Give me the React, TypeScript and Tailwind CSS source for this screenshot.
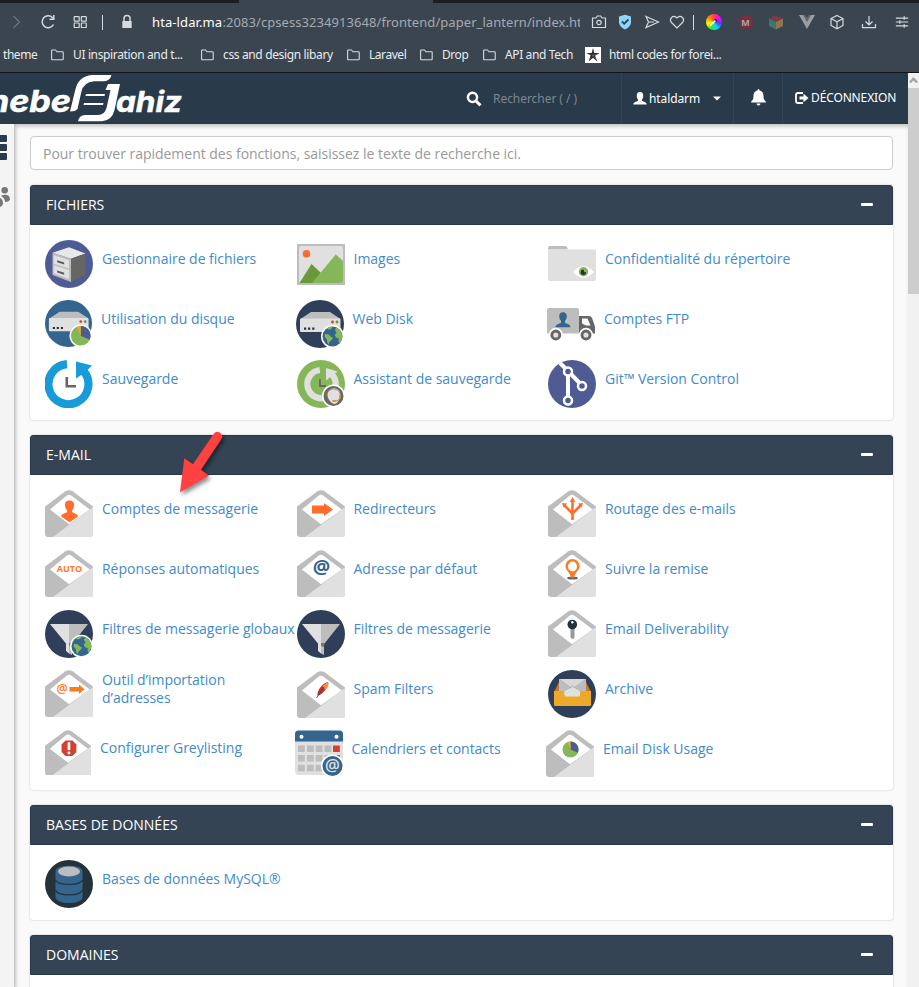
import React from 'react';

type IconProps = { size?: number };

const BLUE = '#33658f';
const NAVY = '#2f3f5a';
const PURPLE = '#4f5b93';
const GREEN = '#85b759';
const ORANGE = '#ff6c2c';

function Svg({ size = 48, children }: { size?: number; children: React.ReactNode }) {
  return (
    <svg width={size} height={size} viewBox="0 0 48 48" className="block">
      {children}
    </svg>
  );
}

function Globe({ x, y }: { x: number; y: number }) {
  return (
    <g transform={`translate(${x} ${y})`}>
      <circle r="11.5" fill="#fff" />
      <circle r="10" fill={BLUE} />
      <path d="M-5.500-8.300C-3.500-9.600-1-10 .5-9.900L-.5-8.200-2-7.300-4.500-6.800ZM-7.500-2.500-4-2-1.500 .2.5 1.200-.8 3.500-3 5.200-3.800 8-5.200 6-5.500 3-7.800.5Z" fill={GREEN} />
      <path d="M3.500-9.200 6-7.800 8.300-5.400 9.700-1.500 9.600 2 8.300 5 7 6.800 6 4.500 6.200 1.800 3.500 1 2.200-1.500 4-4 2.500-6Z" fill={GREEN} />
    </g>
  );
}

function Pie({ x, y, r }: { x: number; y: number; r: number }) {
  return (
    <g transform={`translate(${x} ${y}) scale(${r})`}>
      <circle r="1" fill={GREEN} />
      <path d="M0 0V-1A1 1 0 0 1 .92.4Z" fill={PURPLE} />
      <path d="M0 0V-1A1 1 0 0 0-.42-.9Z" fill="#eca72c" />
    </g>
  );
}

function Person({ x, y, fill, scale = 1 }: { x: number; y: number; fill: string; scale?: number }) {
  return (
    <path
      transform={`translate(${x} ${y}) scale(${scale})`}
      fill={fill}
      d="M0-10C3-10 4.500-8 4.300-5.500 4.200-3 3.500-1.500 2.300-.3V2C4 3.500 8.300 3.500 8.500 7H-8.500C-8.300 3.500-4 3.500-2.300 2V-.3C-3.500-1.500-4.200-3-4.300-5.500-4.500-8-3-10 0-10Z"
    />
  );
}

function Envelope({ size, children }: { size?: number; children?: React.ReactNode }) {
  return (
    <Svg size={size}>
      <path d="M0 16.500 20.500 1.200Q24-.8 27.500 1.200L48 16.500V44Q48 47 45 47H3Q0 47 0 44Z" fill="#bdbdbd" />
      <path d="M5 19.500 21.500 5.800Q24 3.600 26.500 5.800L44.800 19.500 24 34.300Z" fill="#fff" />
      <path d="M45 19.300 48 17.200V44.500Q48 47 45.500 47H8Z" fill="#e0e0e0" />
      {children}
    </Svg>
  );
}

function Server() {
  return (
    <>
      <path d="M15 12H34L44.500 19H4.500Z" fill="#bdbdbd" />
      <rect x="4" y="18.500" width="40.500" height="13.500" rx="1" fill="#e0e0e0" />
      <path d="M8 27.500h2.200v2.200H8ZM12 27.500h2.200v2.200H12ZM16.200 27.500h2.200v2.200h-2.200Z" fill="#26323a" />
      <circle cx="36.500" cy="22" r="1.400" fill="#d43f2f" />
      <circle cx="41" cy="22" r="1.400" fill="#6a9a38" />
    </>
  );
}

function Funnel() {
  return (
    <>
      <circle cx="24" cy="24" r="24" fill={NAVY} />
      <path d="M5 14H24V33L21 33.500Z" fill="#e0e0e0" />
      <path d="M24 14H43L27.500 33.500H24Z" fill="#bdbdbd" />
      <path d="M21 33H24V43.500L21 41Z" fill="#e0e0e0" />
      <path d="M24 33h3V45l-3-1.500Z" fill="#bdbdbd" />
      <path d="M24 33h4l-1.500 4-2.500-1Z" fill="#777" />
    </>
  );
}

const FileManager = () => (
  <Svg>
    <circle cx="24" cy="24" r="24" fill={PURPLE} />
    <path d="M7.500 12.800 24 7.200 40.500 13.500 26 18.800Z" fill="#e8e8e8" />
    <path d="M7.500 12.800 26 18.800V42L7.500 35Z" fill="#bdbdbd" />
    <path d="M26 18.800 40.500 13.500V35L26 42Z" fill="#666" />
    <path d="M8.700 15.200 24 20.300V28.500L8.700 23.700ZM8.700 25.200 24 30V39L8.700 33.200Z" fill="#e0e0e0" />
    <path d="M12.200 20.200l7 2.200v2l-7-2.200ZM12.200 30.500l7 2.200v2l-7-2.200Z" fill="#575b61" />
  </Svg>
);

const ImagesIcon = () => (
  <Svg>
    <rect y="4" width="48" height="41" fill="#bdbdbd" />
    <rect x="2" y="6" width="44" height="37" rx="2" fill="#e0e0e0" />
    <circle cx="9.500" cy="13.800" r="3.800" fill={ORANGE} />
    <path d="M2.500 43 14.500 24 24 33V43Z" fill="#6a9a38" />
    <path d="M15 43 38.800 14.500 46 21V41Q46 43 44 43Z" fill={GREEN} />
  </Svg>
);

const Privacy = () => (
  <Svg>
    <path d="M0 8Q0 6 2 6H17.500Q19 6 20 9.500H0Z" fill="#bdbdbd" />
    <path d="M0 11Q0 9.500 1.500 9.500H46.500Q48 9.500 48 11V39Q48 41 46 41H2Q0 41 0 39Z" fill="#e0e0e0" />
    <path d="M25 32Q35 20.500 46 32 35 43.500 25 32Z" fill="#fff" />
    <circle cx="35.500" cy="31.800" r="4.700" fill={GREEN} />
    <path d="M35.500 29.500A2.700 2.700 0 1 0 38 32l-1.700.2Z" fill="#26323a" />
  </Svg>
);

const DiskUsage = ({ size }: IconProps) => (
  <Svg size={size}>
    <circle cx="24" cy="24" r="24" fill={BLUE} />
    <Server />
    <circle cx="36.500" cy="36.500" r="11.500" fill="#fff" />
    <Pie x={36.500} y={36.500} r={10} />
  </Svg>
);

const WebDisk = () => (
  <Svg>
    <circle cx="24" cy="24" r="24" fill={NAVY} />
    <Server />
    <Globe x={36.500} y={36.500} />
  </Svg>
);

const Ftp = () => (
  <Svg>
    <path d="M2 8H30Q32 8 32 10V33.500H0V10Q0 8 2 8Z" fill="#bdbdbd" />
    <Person x={16} y={21} fill={BLUE} scale={0.88} />
    <path d="M32 16H42Q44 16 45 18L47.500 25Q48 26.500 48 28V33.500H32Z" fill="#666" />
    <path d="M35 18.500H40.500L43.500 25.500H39L35 23.500Z" fill="#fff" />
    {[8.800, 39].map((x) => (
      <g key={x}>
        <circle cx={x} cy="35" r="7.200" fill="#fff" />
        <circle cx={x} cy="35" r="4" fill="#e0e0e0" stroke="#666" strokeWidth="2.900" />
      </g>
    ))}
  </Svg>
);

const Backup = () => (
  <Svg>
    <path d="M22 4.200A20 20 0 1 0 38.500 11" fill="none" stroke="#189cd9" strokeWidth="8.200" />
    <path d="M31 1.500 47 5.500 43.500 9 37 14.500 31 18.500Z" fill="#189cd9" />
    <path d="M21.800 17V26.200H31" fill="none" stroke="#666" strokeWidth="2.600" />
  </Svg>
);

const BackupWizard = () => (
  <Svg>
    <circle cx="24" cy="24" r="24" fill={GREEN} />
    <path d="M22.800 10A14.200 14.200 0 1 0 34.500 14" fill="none" stroke="#e0e0e0" strokeWidth="6.200" />
    <path d="M29 8 40.500 11.500 29 20.500Z" fill="#e0e0e0" />
    <path d="M23 19V26H29" fill="none" stroke="#666" strokeWidth="1.800" />
    <circle cx="36.500" cy="36" r="11.500" fill="#fff" />
    <circle cx="36.500" cy="36" r="10" fill="#666" />
    <path d="M30.500 35C30.500 26 43.500 26 43.500 35 43.500 39 40 44 37.500 44 34 43.500 30.500 39 30.500 35Z" fill="#e0e0e0" />
    <path d="M29.700 36.500C29.500 26.500 43.500 26.500 43.500 36.500 43.500 39.500 40.500 41 38 41" fill="none" stroke="#b98a3c" strokeWidth="1" />
    <rect x="42" y="35" width="1.800" height="3.800" fill="#d9962b" />
    <rect x="35.500" y="40" width="3.200" height="2" fill="#d9962b" />
  </Svg>
);

const Git = () => (
  <Svg>
    <circle cx="24" cy="24" r="24" fill={PURPLE} />
    <path d="M12 3 20 11 34 25.500M20 11V40" fill="none" stroke="#fff" strokeWidth="4" />
    <circle cx="20" cy="11.500" r="4" fill={PURPLE} stroke="#fff" strokeWidth="2.500" />
    <circle cx="34" cy="26" r="4" fill={PURPLE} stroke="#fff" strokeWidth="2.500" />
    <circle cx="20" cy="40.500" r="4" fill={PURPLE} stroke="#fff" strokeWidth="2.500" />
  </Svg>
);

const MailPerson = () => (
  <Envelope>
    <path d="M24.500 10.500C28 10.500 29.300 12.500 29 15.500 28.800 18 27.800 19.500 27 20.500V22C29 23.500 32.800 23.500 33 26.500L24.500 32.300 16.200 26.500C16.300 23.500 20.200 23.500 22.200 22V20.500C21.300 19.500 20.200 18 20 15.500 19.800 12.500 21 10.500 24.500 10.500Z" fill={ORANGE} />
  </Envelope>
);
const MailForward = () => (
  <Envelope>
    <path d="M15 15.500H27V13L36 19.500 27 26V23.500H15Z" fill={ORANGE} />
  </Envelope>
);
const MailRoute = () => (
  <Envelope>
    <path d="M24.500 30V11M24.500 23.500 16.500 15.500M24.500 23.500 32.500 15.500" fill="none" stroke={ORANGE} strokeWidth="2.600" />
    <path d="M24.500 7 27.300 12H21.700ZM14 13 19 13.500 15.500 17.500ZM35 13 30 13.500 33.500 17.500Z" fill={ORANGE} />
  </Envelope>
);
const MailAuto = () => (
  <Envelope>
    <text x="24.500" y="22" textAnchor="middle" className="font-['Open_Sans',sans-serif] text-[9px] font-bold" fill="#ff7920">AUTO</text>
  </Envelope>
);
const MailAt = () => (
  <Envelope>
    <text x="24.500" y="24.300" textAnchor="middle" className="font-['Open_Sans',sans-serif] text-[19.5px] font-bold" fill={BLUE}>@</text>
  </Envelope>
);
const MailTrack = () => (
  <Envelope>
    <ellipse cx="24.500" cy="28.200" rx="5.500" ry="1.400" fill="#666" />
    <path d="M24.500 9A7 7 0 0 0 17.500 16C17.500 20.500 22 22.500 22.500 26.500L24.500 28.500 26.500 26.500C27 22.500 31.500 20.500 31.500 16A7 7 0 0 0 24.500 9Z" fill="#ff7920" />
    <ellipse cx="24.500" cy="16.500" rx="4.500" ry="5" fill="#fff" />
  </Envelope>
);
const GlobalFilter = () => (
  <Svg>
    <Funnel />
    <Globe x={36.500} y={36.300} />
  </Svg>
);
const Filter = () => (
  <Svg>
    <Funnel />
  </Svg>
);
const MailKey = () => (
  <Envelope>
    <path d="M22.500 18h4v9.500l-1.500 1.700-2.500-1.500Z" fill="#999" />
    <circle cx="24.300" cy="14.500" r="4.800" fill="#26323a" />
    <circle cx="24.300" cy="12.300" r="1.200" fill="#fff" />
  </Envelope>
);
const MailImport = () => (
  <Envelope>
    <text x="17" y="22.800" textAnchor="middle" className="font-['Open_Sans',sans-serif] text-[12.5px] font-semibold" fill="#ff7920">@</text>
    <path d="M24.500 17H34V14.500L39.500 19.200 34 24V21.500H24.500Z" fill="#ff7920" />
  </Envelope>
);
const MailSpam = () => (
  <Envelope>
    <path d="M20.500 24.800C19.500 20 25.500 12 31 11 32.500 14 26.500 23.500 20.500 24.800Z" fill="#c0332b" />
    <path d="M25.500 15 31 11C32.500 13 30.500 16.500 28.500 19Z" fill="#ff9038" />
    <path d="M27 16 19.500 27" stroke="#553d72" strokeWidth=".9" />
  </Envelope>
);
const Archive = () => (
  <Svg>
    <circle cx="24" cy="24" r="24" fill={NAVY} />
    <path d="M11 12H38L43 22V35H6V22Z" fill="#bf7a2a" />
    <rect x="11" y="9" width="27" height="16" fill="#d8d8d8" />
    <path d="M11 9 21.500 17.500 11 25ZM38 9 27.500 17.500 38 25Z" fill="#bdbdbd" />
    <path d="M11 9 24.500 19 38 9M11 25 24.500 16 38 25" fill="none" stroke="#999" strokeWidth=".6" />
    <path d="M6 21H16.500V26H32V21H43V34.500Q43 36 41.500 36H7.500Q6 36 6 34.500Z" fill="#eda92a" />
    <path d="M16.500 21 24.500 17.500 32 21V25Q32 26.500 30.500 26.500H18Q16.500 26.500 16.500 25Z" fill="#e0e0e0" />
  </Svg>
);
const MailGrey = ({ size }: IconProps) => (
  <Envelope size={size}>
    <path d="M21.300 11H28.700L32.700 15V23L28.700 27H21.300L17.300 23V15Z" fill="#d43f2f" />
    <path d="M25 12.800V21" stroke="#fff" strokeWidth="2.800" />
    <circle cx="25" cy="24" r="1.500" fill="#fff" />
  </Envelope>
);
const Calendar = () => (
  <Svg>
    <rect y="1" width="48" height="44" rx="4" fill="#e0e0e0" />
    <path d="M0 11.500V4Q0 .5 3.500.5H44.500Q48 .5 48 4V11.500Z" fill={BLUE} />
    <circle cx="6.500" cy="6.800" r="2" fill="#fff" />
    <circle cx="41.500" cy="6.800" r="2" fill="#fff" />
    {[15.500, 25, 34.800].map((y) =>
      [3, 12, 20.700, 29.500, 38].map((x) => (
        <rect key={`${x}-${y}`} x={x} y={y} width="6.800" height="6.500" fill={x === 38 && y < 30 ? '#d43f2f' : '#bdbdbd'} />
      )),
    )}
    <circle cx="37.500" cy="36" r="11.600" fill="#fff" />
    <circle cx="37.500" cy="36" r="10" fill={BLUE} />
    <text x="37.500" y="40.500" textAnchor="middle" className="font-['Open_Sans',sans-serif] text-[16.5px] font-semibold" fill="#e0e0e0">@</text>
  </Svg>
);
const MailUsage = () => (
  <Envelope>
    <Pie x={24.500} y={19.500} r={8} />
  </Envelope>
);
const Database = () => (
  <Svg>
    <circle cx="24" cy="24" r="24" fill="#26323a" />
    <path d="M10.500 11V37C10.500 45 37.500 45 37.500 37V11C37.500 4 10.500 4 10.500 11Z" fill={BLUE} />
    <ellipse cx="24" cy="11.500" rx="11" ry="4.900" fill="#bdbdbd" />
    <path d="M10.500 20C13 26 35 26 37.500 20M10.500 30C13 36.500 35 36.500 37.500 30" fill="none" stroke="#26323a" strokeWidth="1.200" />
  </Svg>
);

type Feature = { label: string; icon: React.ReactNode; width?: string; iconClass?: string; labelHeight?: string };

const files: Feature[] = [
  { label: 'Gestionnaire de fichiers', icon: <FileManager /> },
  { label: 'Images', icon: <ImagesIcon /> },
  { label: 'Confidentialité du répertoire', icon: <Privacy /> },
  { label: 'Utilisation du disque', icon: <DiskUsage size={47} />, width: 'w-[250.500px]' },
  { label: 'Web Disk', icon: <WebDisk /> },
  { label: 'Comptes FTP', icon: <Ftp /> },
  { label: 'Sauvegarde', icon: <Backup /> },
  { label: 'Assistant de sauvegarde', icon: <BackupWizard /> },
  { label: 'Git™ Version Control', icon: <Git /> },
];

const mail: Feature[] = [
  { label: 'Comptes de messagerie', icon: <MailPerson /> },
  { label: 'Redirecteurs', icon: <MailForward /> },
  { label: 'Routage des e-mails', icon: <MailRoute /> },
  { label: 'Réponses automatiques', icon: <MailAuto /> },
  { label: 'Adresse par défaut', icon: <MailAt /> },
  { label: 'Suivre la remise', icon: <MailTrack /> },
  { label: 'Filtres de messagerie globaux', icon: <GlobalFilter /> },
  { label: 'Filtres de messagerie', icon: <Filter /> },
  { label: 'Email Deliverability', icon: <MailKey /> },
  { label: 'Outil d’importation\nd’adresses', icon: <MailImport /> },
  { label: 'Spam Filters', icon: <MailSpam />, iconClass: 'pt-px' },
  { label: 'Archive', icon: <Archive /> },
  { label: 'Configurer Greylisting', icon: <MailGrey size={46} />, width: 'w-[249.500px]', labelHeight: 'h-9' },
  { label: 'Calendriers et contacts', icon: <Calendar /> },
  { label: 'Email Disk Usage', icon: <MailUsage /> },
];

const databases: Feature[] = [{ label: 'Bases de données MySQL®', icon: <Database /> }];

function Panel({ title, items }: { title: string; items: Feature[] }) {
  const rows: Feature[][] = [];
  for (let i = 0; i < items.length; i += 3) rows.push(items.slice(i, i + 3));
  return (
    <section className="mb-[15px] w-[863px] shrink-0 rounded-[3px] bg-white shadow-[0_0_2px_rgba(0,0,0,0.25)]">
      <h2 className="flex h-10 items-center justify-between rounded-t-[3px] border border-[#293a4a] bg-[#354454] pr-[19px] pl-[15px] text-[14px] leading-5 text-white">
        <span>{title}</span>
        <span className="mb-px h-[3px] w-3 rounded-[1px] bg-white" />
      </h2>
      {rows.length > 0 && (
        <div className="pt-[15px] pl-[15px]">
          {rows.map((row, i) => (
            <div key={i} className="flex h-[60px]">
              {row.map((f) => (
                <a key={f.label} className={`flex shrink-0 gap-[9px] ${f.width ?? 'w-[251.500px]'}`}>
                  <span className={`shrink-0 ${f.iconClass ?? ''}`}>{f.icon}</span>
                  <span className={`flex items-center text-[14px] leading-[18px] tracking-[-0.02px] whitespace-pre text-[#428bca] ${f.labelHeight ?? 'h-[38px]'}`}>{f.label}</span>
                </a>
              ))}
            </div>
          ))}
        </div>
      )}
      {rows.length === 0 && <div className="h-20" />}
    </section>
  );
}

function Line({ children, w = 16, sw = 1.2 }: { children: React.ReactNode; w?: number; sw?: number }) {
  return (
    <svg width={w} height={w} viewBox="0 0 16 16" fill="none" stroke="#d5dade" strokeWidth={sw}>
      {children}
    </svg>
  );
}

function Slot({ className, children }: { className: string; children: React.ReactNode }) {
  return <span className={`flex shrink-0 items-center justify-center ${className}`}>{children}</span>;
}

function Folder() {
  return (
    <svg width="13" height="12" viewBox="0 0 13 12" fill="none" stroke="#d5dade" strokeWidth="1.100" className="mr-[9px] shrink-0">
      <path d="M.6 1.600Q.6 1 1.200 1H4.500L6 2.800H11.500Q12.200 2.800 12.200 3.500V10Q12.200 10.700 11.500 10.700H1.300Q.6 10.700.6 10Z" />
    </svg>
  );
}

function Bookmark({ className, children }: { className: string; children: React.ReactNode }) {
  return (
    <span className="flex shrink-0 items-center">
      <Folder />
      <span className={`shrink-0 whitespace-nowrap ${className}`}>{children}</span>
    </span>
  );
}

function BrowserChrome() {
  return (
    <div className="h-[73px] shrink-0 border-b border-[#10151a] bg-[#3b4550] font-['Noto_Sans',sans-serif]">
      <div className="flex h-[3px] justify-between">
        <span className="w-[239px] bg-[#1a1d21]" />
        <span className="w-[486px] bg-[#1a1d21]" />
      </div>
      <div className="flex h-[38px] items-center">
        <Slot className="w-8"><Line><path d="m5.500 2 6 6-6 6" stroke="#6d7680" /></Line></Slot>
        <Slot className="w-8"><Line sw={1.500}><path d="M13.500 10.500A6 6 0 1 1 13 4.200" /><path d="M13.800 1V5.200H9.500" /></Line></Slot>
        <Slot className="w-8"><Line><rect x="2.200" y="2.700" width="5" height="4.500" rx=".6" /><rect x="9.300" y="2.700" width="5" height="4.500" rx=".6" /><rect x="2.200" y="9" width="5" height="4.500" rx=".6" /><rect x="9.300" y="9" width="5" height="4.500" rx=".6" /></Line></Slot>
        <Slot className="w-[13px]"><span className="h-[15px] w-px bg-[#d5dade]" /></Slot>
        <Slot className="w-9"><Line><path d="M5 7V4.500a3 3 0 0 1 6 0V7" strokeWidth="1.500" /><rect x="3.300" y="7" width="9.400" height="7" rx=".6" fill="#d5dade" stroke="none" /></Line></Slot>
        <span className="ml-[7px] flex w-[428px] shrink-0 overflow-hidden text-[13px] leading-5 whitespace-nowrap text-[#a3aab1]">
          <span className="w-[70.500px] shrink-0 tracking-[0.1px] text-white">hta-ldar.ma</span>
          <span className="tracking-[0.06px]">:2083/cpsess3234913648/frontend/paper_lantern/index.ht</span>
        </span>
        <Slot className="ml-1.5 w-[26px]"><Line><path d="M1.500 4H5L6.300 2H9.700L11 4H14.500V13.500H1.500Z" /><circle cx="8" cy="8.500" r="2.200" /></Line></Slot>
        <Slot className="w-[26px]"><Line><path d="M2 2.500 8 .8 14 2.500V9Q13 13 8 15.500 3 13 2 9Z" fill="#8ed4fb" stroke="none" /><path d="m5 7.500 2.200 2.200L11.500 5.500" stroke="#31475a" strokeWidth="1.800" /></Line></Slot>
        <Slot className="w-[27px]"><Line><path d="M2 2.500 14.500 8 2 13.500 4.500 8ZM4.500 8H10" /></Line></Slot>
        <Slot className="w-[23px]"><Line><path d="M8 14 2.500 8.500C-.5 5 4.500-.5 8 4 11.500-.5 16.500 5 13.500 8.500Z" /></Line></Slot>
        <Slot className="ml-0.5 w-[7px]"><span className="h-[15px] w-px bg-[#d5dade]" /></Slot>
        <Slot className="w-[34px]">
          <span className="flex h-4 w-4 items-center justify-center rounded-full bg-[conic-gradient(#f44,#f0f,#44f,#0df,#2e2,#ff0,#f80,#f44)]">
            <Line w={12}><path d="M3 13 10 6" stroke="#fff" strokeWidth="2" /><path d="m9 4 3 3" stroke="#222" strokeWidth="2" /></Line>
          </span>
        </Slot>
        <Slot className="w-[29px]"><span className="flex h-3.5 w-3.5 items-center justify-center rounded-full bg-[#7a2f3a] text-[9px] leading-none font-bold text-[#a7a9ab]">M</span></Slot>
        <Slot className="w-[31px]"><Line sw={0}><path d="M8 1 15 4.500 8 8 1 4.500Z" fill="#7d3945" /><path d="M1 4.500 8 8V15.500L1 12Z" fill="#3d756f" /><path d="M15 4.500 8 8V15.500L15 12Z" fill="#8b774c" /></Line></Slot>
        <Slot className="w-[31px]"><Line sw={0}><path d="M0 1H16L8 15Z" fill="#999da1" /><path d="M4 1H12L8 8Z" fill="#60666d" /><path d="M6.300 1H9.700L8 4Z" fill="#3b4550" /></Line></Slot>
        <Slot className="w-[30px]"><Line><path d="M8 1.500 14 4.500V11.500L8 14.800 2 11.500V4.500ZM2 4.500 8 7.700 14 4.500M8 7.700V14.800" /></Line></Slot>
        <Slot className="w-[34px]"><Line><path d="M8 2V10.500M4.500 7.500 8 11 11.500 7.500M1.500 10V13.700H14.500V10" /></Line></Slot>
        <Slot className="w-8"><Line w={14} sw={1.400}><path d="M1 3.500H15M1 8H15M1 12.500H15M10.500 1.500v4M5.500 6v4M10.500 10.500v4" /></Line></Slot>
      </div>
      <div className="flex h-[28px] items-center pl-[3px] text-[12px] leading-4 text-[#e8ebee]">
        <span className="mr-[14px] w-[34px] shrink-0 tracking-[-0.45px]">theme</span>
        <Bookmark className="w-32 tracking-[-0.36px]">UI inspiration and t...</Bookmark>
        <Bookmark className="w-[124px] tracking-[-0.36px]">css and design libary</Bookmark>
        <Bookmark className="w-[51px] tracking-[-0.45px]">Laravel</Bookmark>
        <Bookmark className="w-[41px] tracking-[-0.45px]">Drop</Bookmark>
        <Bookmark className="w-[80px] tracking-[-0.38px]">API and Tech</Bookmark>
        <span className="mr-2 flex h-4 w-4 shrink-0 items-center justify-center bg-white">
          <svg width="14" height="14" viewBox="0 0 14 14"><path d="M7 0 8.300 5H13.500L9 7.700 11.500 13.500 7 9.700 2.500 13.500 5 7.700.5 5H5.700Z" fill="#222" /><path d="M7 3V7.500L3 12M7 7.500 11 12M7 7.500 2.500 5.700M7 7.500 11.500 5.700" stroke="#999" strokeWidth=".5" /></svg>
        </span>
        <span className="shrink-0 tracking-[-0.34px] whitespace-nowrap">html codes for forei...</span>
      </div>
    </div>
  );
}

function Logo() {
  return (
    <svg width="190" height="51" viewBox="0 73 190 51" className="block shrink-0" fill="#fff">
      <text x="-12" y="111.500" className="font-['Inter',sans-serif] text-[30px] font-bold italic" stroke="#fff" strokeWidth=".5" textLength="83" lengthAdjust="spacingAndGlyphs">nebe</text>
      <path d="M70 111.500 75 91Q78 76 92 75H111.500Q110 81 104 81.200H94Q83.500 82 81.300 92L77.500 109Q75.500 111.500 70 111.500Z" />
      <path d="M105.500 90 108 84H120L114.500 110Q112 120.500 102 121.200H78Q79 115.500 85 115H98Q104.500 115 106.500 108L110.500 90Z" />
      <path d="M86 94H105L104.500 96H85.500ZM84 103H103.500L103 105H83.500Z" />
      <text x="116" y="111.500" className="font-['Inter',sans-serif] text-[29px] font-bold italic" stroke="#fff" strokeWidth=".5" textLength="66" lengthAdjust="spacingAndGlyphs">ahiz</text>
    </svg>
  );
}

function Header() {
  return (
    <header className="flex h-[51px] shrink-0 bg-[#293a4a] font-['Noto_Sans',sans-serif] text-[12px] text-white">
      <Logo />
      <div className="flex w-[432px] items-center border-r border-[#344456] pl-[276px]">
        <svg width="16" height="16" viewBox="0 0 16 16" fill="none" stroke="#fff" className="mr-[11px]">
          <circle cx="6.500" cy="6.300" r="4.600" strokeWidth="2.500" />
          <path d="m10 10 4.500 4.300" strokeWidth="3" />
        </svg>
        <span className="tracking-[-0.05px] whitespace-nowrap text-[#7e8890]">Rechercher ( / )</span>
      </div>
      <div className="flex w-28 items-center border-r border-[#344456] pl-[11px]">
        <svg width="14" height="13" viewBox="0 0 14 13" className="mr-[2px]"><path d="M7 0C9.500 0 10.500 2 10.200 4.500 10 6.500 9 7.500 8.700 8.300 9 9.800 13.500 9.500 13.700 12.500H.3C.5 9.500 5 9.800 5.300 8.300 5 7.500 4 6.500 3.800 4.500 3.500 2 4.500 0 7 0Z" fill="#fff" /></svg>
        <span className="w-[64px] tracking-[-0.1px]">htaldarm</span>
        <svg width="8" height="5" viewBox="0 0 8 5"><path d="M0 .5H8L4 4.500Z" fill="#fff" /></svg>
      </div>
      <div className="flex w-[49px] items-center justify-center border-r border-[#344456]">
        <svg width="15" height="17" viewBox="0 0 15 17" className="mb-0.5" fill="#fff"><path d="M7.500 0Q8.500 0 8.600 1.600C11.500 2.200 12.500 4.500 12.500 7 12.500 10 13.300 11.300 14.800 12.500V13.500H.2V12.500C1.700 11.300 2.500 10 2.500 7 2.500 4.500 3.500 2.200 6.400 1.600Q6.500 0 7.500 0ZM5.500 14.500H9.500A2 2 0 0 1 5.500 14.500Z" /></svg>
      </div>
      <div className="flex items-center pb-[2px] pl-3">
        <svg width="14" height="12" viewBox="0 0 14 12" className="mr-[2px]" fill="none"><path d="M8 1H3Q1 1 1 3V9Q1 11 3 11H8" stroke="#fff" strokeWidth="1.800" /><path d="M4.500 4.500H8.500V1.800L13.500 6 8.500 10.200V7.500H4.500Z" fill="#fff" /></svg>
        <span className="tracking-[-0.13px]">DÉCONNEXION</span>
      </div>
    </header>
  );
}

export default function App() {
  return (
    <div className="relative flex h-[987px] w-[919px] flex-col overflow-hidden bg-[#fafafa] font-['Open_Sans',sans-serif]">
      <BrowserChrome />
      <div className="flex min-h-0 flex-1">
        <div className="flex w-[908px] flex-col">
          <Header />
          <div className="flex min-h-0 flex-1 overflow-hidden shadow-[inset_0_4px_4px_-2px_rgba(0,0,0,0.25)]">
            <aside className="w-[14px] shrink-0 bg-[#f4f4f4] pt-[11px] shadow-[1px_2px_4px_rgba(0,0,0,0.35)]">
              <div className="flex w-[7px] flex-col gap-[2px]">
                <span className="h-[7px] rounded-r-[1px] bg-[#293a4a]" />
                <span className="h-[7px] rounded-r-[1px] bg-[#293a4a]" />
                <span className="h-[7px] rounded-r-[1px] bg-[#293a4a]" />
              </div>
              <svg width="11" height="22" viewBox="0 0 11 22" className="mt-[26px]" fill="#777">
                <circle cx="4.700" cy="4.300" r="3.300" />
                <path d="M1 10Q3 8.500 6 8.700 10 9.500 10 13.500 9 16 5 16 5 12 1 10Z" />
                <path d="M0 12Q3 13 3 18 2 20.500 0 21Z" />
              </svg>
            </aside>
            <main className="flex flex-col pt-3 pl-4">
              <div className="mb-[15px] flex h-[34px] w-[863px] shrink-0 items-center rounded-[4px] border border-[#ccc] bg-white pl-3 text-[14px] tracking-[-0.02px] text-[#999]">
                Pour trouver rapidement des fonctions, saisissez le texte de recherche ici.
              </div>
              <Panel title="FICHIERS" items={files} />
              <Panel title="E-MAIL" items={mail} />
              <Panel title="BASES DE DONNÉES" items={databases} />
              <Panel title="DOMAINES" items={[]} />
            </main>
          </div>
        </div>
        <div className="flex w-[11px] flex-col bg-[#f1f1f1]">
          <span className="flex h-[15px] items-center justify-center">
            <svg width="9" height="7" viewBox="0 0 9 7"><path d="M1 5.500 4.500 1.800 8 5.500" fill="none" stroke="#a3a3a3" strokeWidth="2.400" /></svg>
          </span>
          <span className="h-[206px] bg-[#cdcdcd]" />
        </div>
      </div>
      <svg width="56" height="76" viewBox="172 426 56 76" className="absolute top-[426px] left-[172px] drop-shadow-[2px_3px_2px_rgba(0,0,0,0.45)]">
        <path d="M180 492.300 184.300 458.300 193 464.300 213.700 433.800A4.700 4.700 0 0 1 221.500 439L201 469.700 209 475.700Z" fill="#fe4242" />
      </svg>
    </div>
  );
}
